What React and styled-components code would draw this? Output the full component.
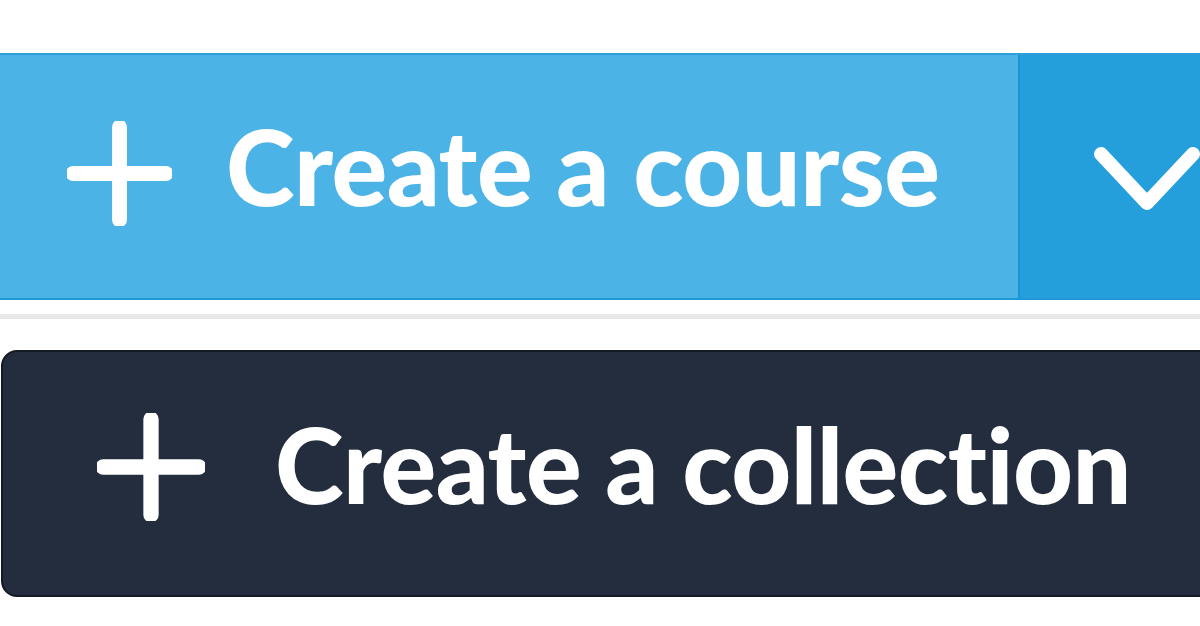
import styled, { createGlobalStyle } from 'styled-components'

const GlobalStyle = createGlobalStyle`
    html, body {
        margin: 0;
        padding: 0;
        background: #ffffff;
        overflow: hidden;
    }

    body {
        font-family: Lato, "Open Sans", sans-serif;
    }
`

const Page = styled.div`
    width: 1200px;
    height: 626px;
    padding-top: 53px;
    box-sizing: border-box;
    overflow: hidden;
`

const SplitButton = styled.div`
    display: flex;
    width: 1240px;
    height: 247px;
    box-sizing: border-box;
    border-top: 2px solid #2a9fda;
    border-bottom: 2px solid #1f98d5;
`

const MainAction = styled.div`
    flex: 0 0 1018px;
    display: flex;
    align-items: center;
    gap: ${({ $gap }) => $gap}px;
    padding-left: 67px;
    padding-bottom: 6px;
    box-sizing: border-box;
    background: #4bb3e6;
    color: #ffffff;
`

const Toggle = styled.div`
    flex: 1;
    display: flex;
    align-items: center;
    padding-left: 72px;
    padding-top: 6px;
    background: #259fdc;
    border-left: 2px solid #1d93cf;
`

const Divider = styled.div`
    width: 1200px;
    height: 5px;
    margin-top: 14px;
    background: #e8e8e9;
`

const DarkButton = styled.div`
    display: flex;
    align-items: center;
    gap: ${({ $gap }) => $gap}px;
    width: 1240px;
    height: 247px;
    margin-top: 31px;
    margin-left: 1px;
    padding-left: 94px;
    padding-bottom: 14px;
    box-sizing: border-box;
    background: #232d3d;
    border: 2px solid #141a24;
    border-radius: 16px;
    color: #ffffff;
`

const Label = styled.span`
    font-family: Lato, "Open Sans", sans-serif;
    font-weight: 900;
    font-size: ${({ $size }) => $size}px;
    letter-spacing: ${({ $tracking }) => $tracking}px;
    line-height: 1;
    white-space: nowrap;
    transform: translateY(${({ $shift = 0 }) => $shift}px);
`

function PlusIcon({ size = 106 }) {
    return (
        <svg width={size} height={size} viewBox="0 0 106 106">
            <path
                d="M53 6 V100 M6 53 H100"
                stroke="#ffffff"
                strokeWidth="15"
                strokeLinecap="round"
                fill="none"
            />
        </svg>
    )
}

function Chevron() {
    return (
        <svg width="110" height="70" viewBox="0 0 110 70">
            <path
                d="M9 9 L55 58 L101 9"
                stroke="#ffffff"
                strokeWidth="14"
                strokeLinecap="round"
                strokeLinejoin="round"
                fill="none"
            />
        </svg>
    )
}

export default function App() {
    return (
        <>
            <GlobalStyle />
            <Page>
                <SplitButton>
                    <MainAction $gap={54}>
                        <PlusIcon size={105} />
                        <Label $size={104} $tracking={-0.5} $shift={-8}>Create a course</Label>
                    </MainAction>
                    <Toggle>
                        <Chevron />
                    </Toggle>
                </SplitButton>

                <Divider />

                <DarkButton $gap={70}>
                    <PlusIcon size={108} />
                    <Label $size={104} $tracking={-0.5} $shift={-3}>Create a collection</Label>
                </DarkButton>
            </Page>
        </>
    )
}
